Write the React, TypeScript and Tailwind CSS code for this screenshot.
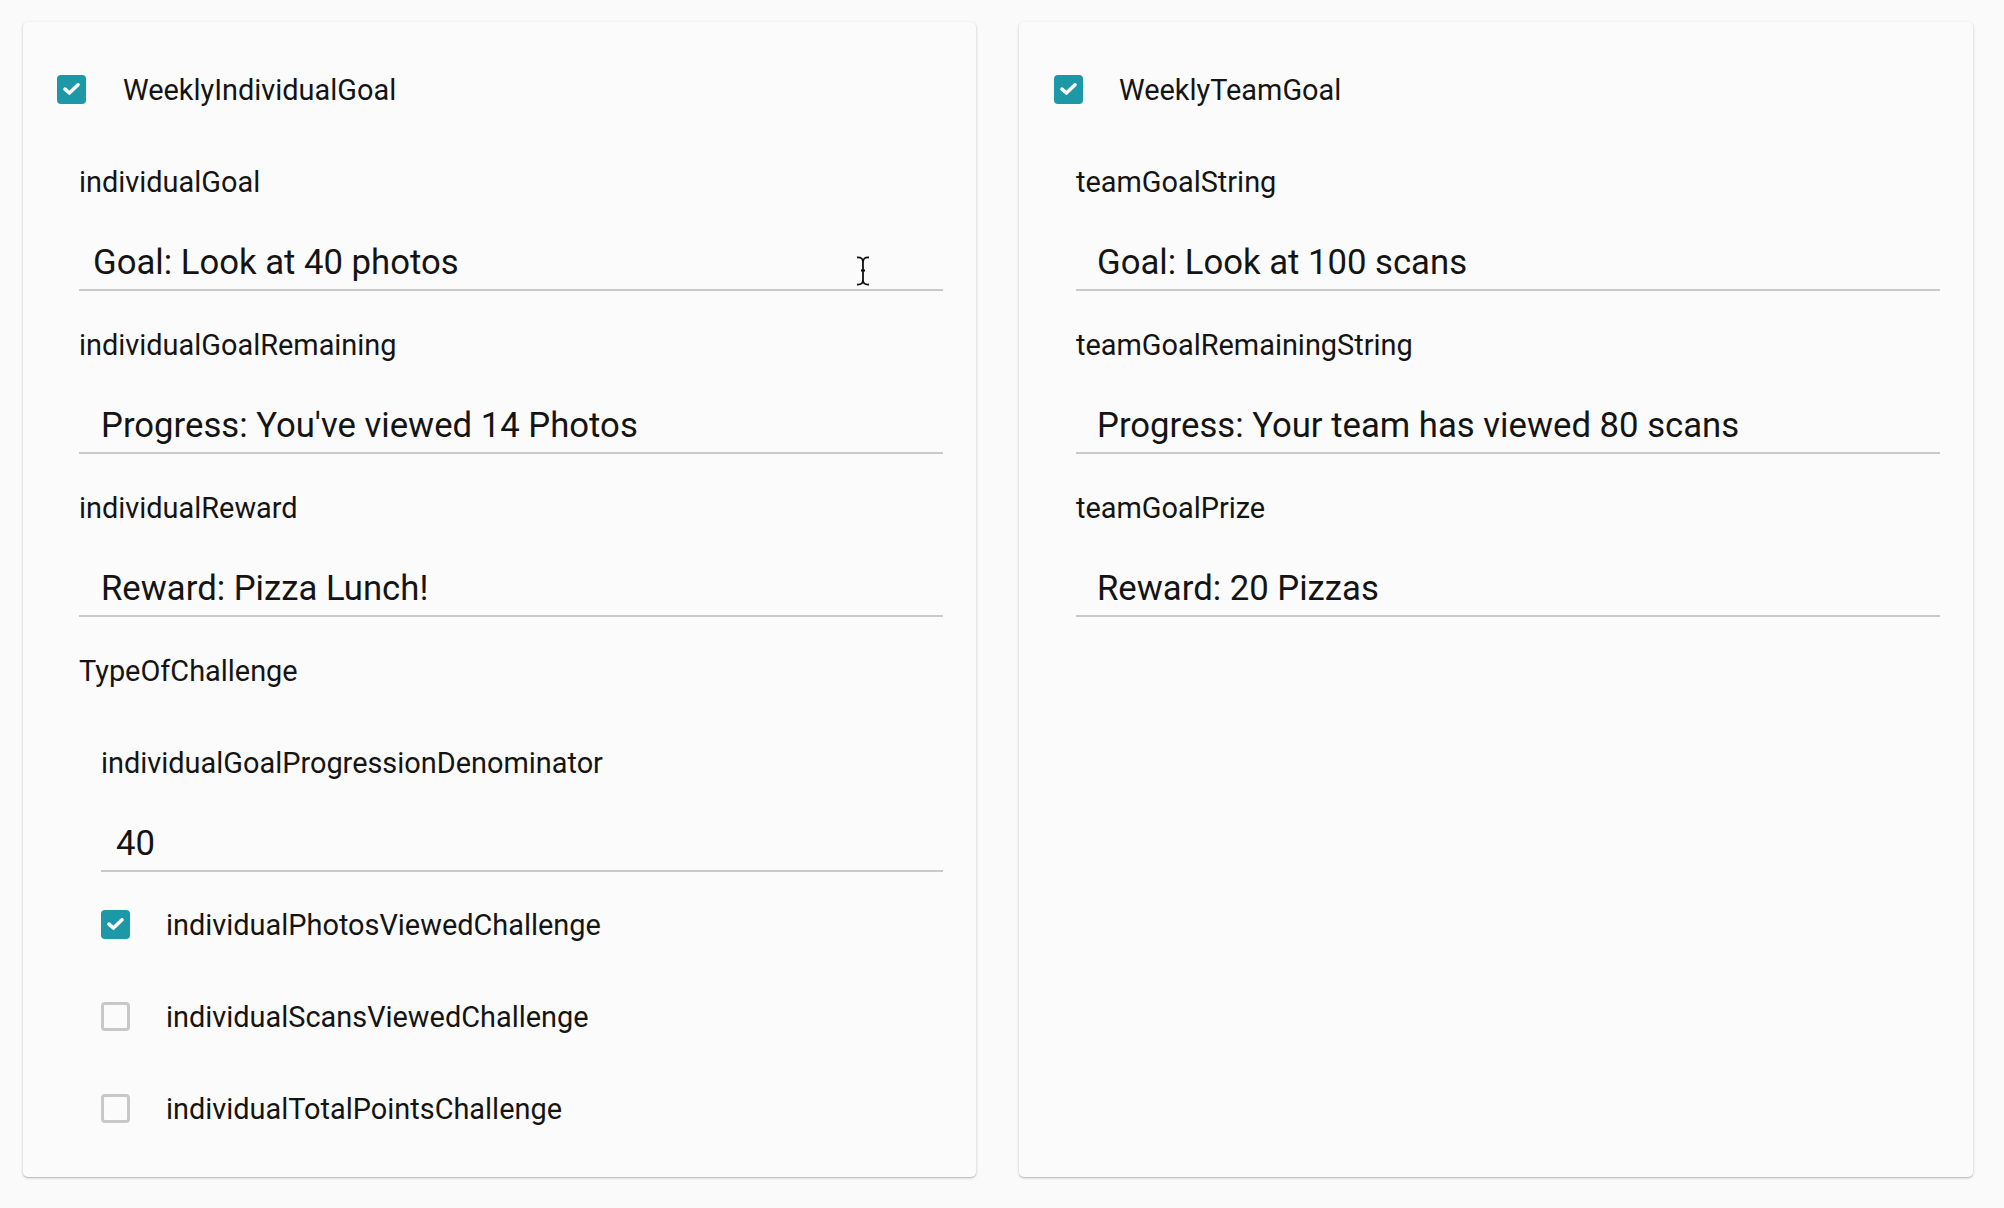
import React from "react";

function Box({ checked }: { checked: boolean }) {
  if (checked) {
    return (
      <div className="w-[29px] h-[29px] rounded-[4px] bg-[#1d98a7] flex items-center justify-center shrink-0">
        <svg width="19" height="14" viewBox="0 0 19 14">
          <path d="M3 7.2 L7.4 11 L16 2.8" fill="none" stroke="#ffffff" strokeWidth="3.6" strokeLinecap="round" strokeLinejoin="round" />
        </svg>
      </div>
    );
  }
  return <div className="w-[29px] h-[29px] rounded-[4px] border-[3px] border-[#c8c8c8] shrink-0" />;
}

function Field({ label, value, pl, cursor }: { label: string; value: string; pl: string; cursor?: boolean }) {
  return (
    <div className="flex flex-col mb-[33px]">
      <div className="h-[40px] pt-[3px] flex items-center text-[28.9px] leading-none">{label}</div>
      <div className={`relative mt-[31px] h-[59px] pt-[3px] border-b-2 border-[#c9c9c9] flex items-center text-[34.7px] leading-none ${pl}`}>
        {value}
        {cursor && (
          <svg className="absolute left-[777px] top-[24px]" width="14" height="30" viewBox="0 0 14 30">
            <path d="M1 1.5 Q7 1 7 6 L7 24 Q7 29 1 28.5 M13 1.5 Q7 1 7 6 M7 24 Q7 29 13 28.5 M5 14.5 L9 14.5" fill="none" stroke="#111" strokeWidth="1.8" />
          </svg>
        )}
      </div>
    </div>
  );
}

function CheckRow({ checked, label }: { checked: boolean; label: string }) {
  return (
    <div className="h-[48px] flex items-center">
      <Box checked={checked} />
      <span className="ml-[36px] pt-[3px] text-[28.9px] leading-none">{label}</span>
    </div>
  );
}

export default function App() {
  return (
    <div
      className="w-[2004px] h-[1208px] bg-[#fafafa] flex gap-[43px] pl-[23px] pr-[31px] pt-[22px] pb-[31px] text-[#141414]"
      style={{ fontFamily: "Roboto, 'Liberation Sans', sans-serif" }}
    >
      <div className="flex-1 bg-[#fbfbfb] rounded-[5px] shadow-[0_1px_3px_rgba(0,0,0,0.22),0_1px_1px_rgba(0,0,0,0.1)] pt-[43px] pl-[34px] pr-[33px] pb-[45px]">
        <div className="h-[48px] flex items-center">
          <Box checked />
          <span className="ml-[37px] pt-[3px] text-[28.9px] leading-none">WeeklyIndividualGoal</span>
        </div>
        <div className="mt-[48px] pl-[22px]">
          <Field label="individualGoal" value="Goal: Look at 40 photos" pl="pl-[14px]" cursor />
          <Field label="individualGoalRemaining" value="Progress: You've viewed 14 Photos" pl="pl-[22px]" />
          <Field label="individualReward" value="Reward: Pizza Lunch!" pl="pl-[22px]" />
          <div className="h-[40px] pt-[3px] flex items-center text-[28.9px] leading-none">TypeOfChallenge</div>
          <div className="mt-[52px] pl-[22px]">
            <div className="flex flex-col">
              <div className="h-[40px] pt-[3px] flex items-center text-[28.9px] leading-none">individualGoalProgressionDenominator</div>
              <div className="mt-[31px] h-[59px] pt-[3px] border-b-2 border-[#c9c9c9] flex items-center text-[34.7px] leading-none pl-[15px]">40</div>
            </div>
            <div className="mt-[28px] flex flex-col gap-[44px]">
              <CheckRow checked label="individualPhotosViewedChallenge" />
              <CheckRow checked={false} label="individualScansViewedChallenge" />
              <CheckRow checked={false} label="individualTotalPointsChallenge" />
            </div>
          </div>
        </div>
      </div>
      <div className="flex-1 bg-[#fbfbfb] rounded-[5px] shadow-[0_1px_3px_rgba(0,0,0,0.22),0_1px_1px_rgba(0,0,0,0.1)] pt-[43px] pl-[35px] pr-[33px] pb-[45px]">
        <div className="h-[48px] flex items-center">
          <Box checked />
          <span className="ml-[36px] pt-[3px] text-[28.9px] leading-none">WeeklyTeamGoal</span>
        </div>
        <div className="mt-[48px] pl-[22px]">
          <Field label="teamGoalString" value="Goal: Look at 100 scans" pl="pl-[21px]" />
          <Field label="teamGoalRemainingString" value="Progress: Your team has viewed 80 scans" pl="pl-[21px]" />
          <Field label="teamGoalPrize" value="Reward: 20 Pizzas" pl="pl-[21px]" />
        </div>
      </div>
    </div>
  );
}
